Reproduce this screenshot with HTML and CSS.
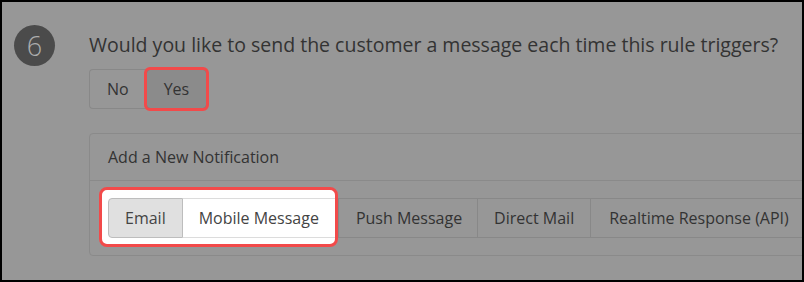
FILE: index.html
```html
<!DOCTYPE html>
<html>
<head>
<meta charset="utf-8">
<link rel="stylesheet" href="styles.css">
</head>
<body>
<div class="frame">
  <div class="step">6</div>
  <div class="content">
    <p class="question">Would you like to send the customer a message each time this rule triggers?</p>
    <div class="choices">
      <span class="choice no">No</span>
      <span class="choice yes">Yes</span>
    </div>
    <div class="panel">
      <div class="panel-head">Add a New Notification</div>
      <div class="panel-body">
        <div class="tabs">
          <div class="spotlight">
            <span class="tab tab-email">Email</span>
            <span class="tab tab-mobile">Mobile Message</span>
          </div>
          <span class="tab tab-dim tab-first">Push Message</span>
          <span class="tab tab-dim">Direct Mail</span>
          <span class="tab tab-dim tab-last">Realtime Response (API)</span>
        </div>
      </div>
    </div>
  </div>
</div>
</body>
</html>
```

FILE: styles.css
```css
html, body {
  margin: 0;
  padding: 0;
}
body {
  font-family: "Open Sans", "Liberation Sans", sans-serif;
  color: #333;
}
.frame {
  width: 804px;
  height: 282px;
  box-sizing: border-box;
  border: 2px solid #000;
  background: #979797;
  overflow: hidden;
  display: flex;
  align-items: flex-start;
  padding: 23px 0 0 12px;
}
.step {
  flex: none;
  width: 41px;
  height: 41px;
  border-radius: 50%;
  background: #4b4b4b;
  color: #adadad;
  font-size: 27px;
  font-weight: 300;
  display: flex;
  align-items: center;
  justify-content: center;
  line-height: 1;
}
.content {
  flex: 1;
  min-width: 0;
  margin-left: 34px;
}
.question {
  margin: 6px 0 0;
  font-size: 19.5px;
  line-height: 28px;
  color: #333;
  white-space: nowrap;
}
.choices {
  display: flex;
  margin-top: 10px;
}
.choice {
  height: 40px;
  box-sizing: border-box;
  line-height: 38px;
  font-size: 16px;
  padding: 0 17px;
  border: 1px solid #888;
  color: #333;
}
.no {
  border-radius: 4px 0 0 4px;
  border-right: none;
}
.yes {
  background: #8b8b8b;
  border-color: #7c7c7c;
  border-radius: 4px;
  outline: 3px solid #f24a4a;
  outline-offset: -1px;
}
.panel {
  margin-top: 24px;
  margin-right: -12px;
  border: 1px solid #8a8a8a;
  border-radius: 4px;
}
.panel-head {
  height: 46px;
  line-height: 46px;
  padding: 0 18px;
  font-size: 16px;
  color: #333;
  border-bottom: 1px solid #8a8a8a;
}
.panel-body {
  padding: 6px 0 8px 9px;
}
.tabs {
  display: flex;
  align-items: flex-start;
}
.spotlight {
  display: flex;
  background: #fff;
  border: 3px solid #f24a4a;
  border-radius: 8px;
  padding: 8px 0 6px 6px;
}
.tab {
  height: 40px;
  box-sizing: border-box;
  line-height: 38px;
  font-size: 16px;
  padding: 0 16px;
  color: #333;
  white-space: nowrap;
  border: 1px solid #888;
}
.tab-email {
  background: #e0e0e0;
  border-color: #bdbdbd;
  border-radius: 4px 0 0 4px;
  color: #444;
}
.tab-mobile {
  background: #fff;
  border-color: #dcdcdc;
  border-left: none;
  border-right: none;
  color: #444;
}
.tab-dim {
  margin-top: 11px;
  border-left: none;
}
.tab-first {
  border-left: 1px solid #888;
  padding: 0 15px 0 17px;
}
.tab-last {
  border-radius: 0 4px 4px 0;
  padding: 0 22px 0 18px;
}
```
